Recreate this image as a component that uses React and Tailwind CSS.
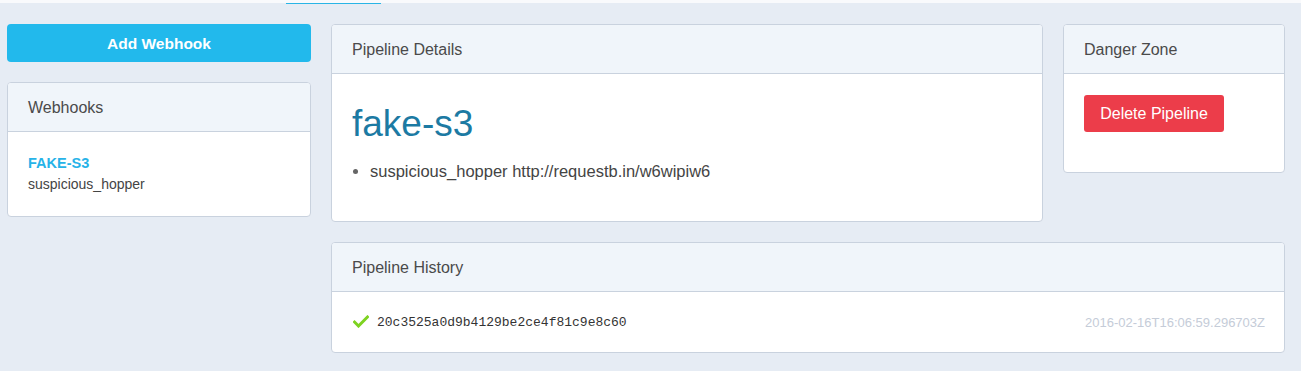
export default function App() {
  return (
    <div className="h-[371px] bg-[#e6ecf4] text-[#444] overflow-hidden" style={{ fontFamily: '"Liberation Sans", Arial, sans-serif' }}>
      {/* top strip */}
      <div className="h-[3px] bg-[#f9fafc] relative">
        <div className="absolute left-[286px] top-[3px] w-[95px] h-[1px] bg-[#29b5e6]" />
      </div>

      <main className="grid grid-cols-[304px_1fr_222px] grid-rows-[auto_auto] gap-5 pl-[7px] pr-4 pt-[21px] items-start">
        {/* left column */}
        <div className="row-span-2 flex flex-col gap-5">
          <button className="h-[38px] pt-[1px] rounded-[4px] bg-[#22b9ec] text-white font-bold text-[15.5px]">Add Webhook</button>
          <section className="bg-white border border-[#c9d2de] rounded-[4px] overflow-hidden">
            <div className="h-[49px] pt-[2px] bg-[#f0f5fa] border-b border-[#c9d2de] px-5 flex items-center text-[16px] text-[#4a4a4a]">Webhooks</div>
            <div className="px-5 pt-[21px] pb-[20px]">
              <div className="text-[#27b3e8] font-bold text-[14.5px] leading-[20px]">FAKE-S3</div>
              <div className="text-[14px] text-[#444] leading-[23px]">suspicious_hopper</div>
            </div>
          </section>
        </div>

        {/* pipeline details */}
        <section className="bg-white border border-[#c9d2de] rounded-[4px] overflow-hidden h-[198px]">
          <div className="h-[49px] pt-[2px] bg-[#f0f5fa] border-b border-[#c9d2de] px-5 flex items-center text-[16px] text-[#4a4a4a]">Pipeline Details</div>
          <div className="px-5 pt-[28px]">
            <h1 className="text-[37px] leading-[44px] text-[#1c7aa3]">fake-s3</h1>
            <ul className="mt-[14px] list-disc pl-[18px] text-[16.5px] text-[#444] leading-[22px] marker:text-[#666]">
              <li>suspicious_hopper http://requestb.in/w6wipiw6</li>
            </ul>
          </div>
        </section>

        {/* danger zone */}
        <section className="bg-white border border-[#c9d2de] rounded-[4px] overflow-hidden h-[149px]">
          <div className="h-[49px] pt-[2px] bg-[#f0f5fa] border-b border-[#c9d2de] px-5 flex items-center text-[16px] text-[#4a4a4a]">Danger Zone</div>
          <div className="px-5 pt-[21px]">
            <button className="w-[140px] h-[37px] pt-[1px] rounded-[3px] bg-[#ec3d4a] text-white text-[16px]">Delete Pipeline</button>
          </div>
        </section>

        {/* pipeline history */}
        <section className="col-span-2 bg-white border border-[#c9d2de] rounded-[4px] overflow-hidden">
          <div className="h-[49px] pt-[2px] bg-[#f0f5fa] border-b border-[#c9d2de] px-5 flex items-center text-[16px] text-[#4a4a4a]">Pipeline History</div>
          <div className="h-[60px] pt-[2px] pl-[21px] pr-[19px] flex items-center">
            <svg width="16" height="13" viewBox="0 0 16 13" className="shrink-0 -mt-[4px]">
              <path d="M1.5 7 L5.5 11 L14.5 2" fill="none" stroke="#7ed321" strokeWidth="3" strokeLinecap="square" />
            </svg>
            <span className="ml-[8px] text-[13px] text-[#333]" style={{ fontFamily: '"Liberation Mono", "Courier New", monospace' }}>20c3525a0d9b4129be2ce4f81c9e8c60</span>
            <span className="ml-auto text-[13px] text-[#c5ccd8]">2016-02-16T16:06:59.296703Z</span>
          </div>
        </section>
      </main>
    </div>
  )
}
